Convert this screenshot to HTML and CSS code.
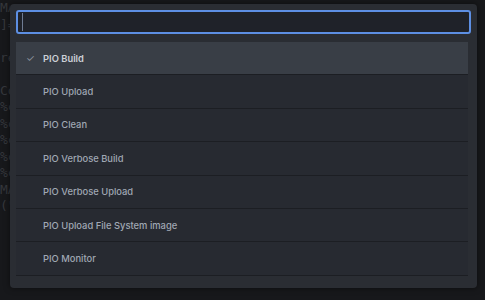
FILE: index.html
```html
<!DOCTYPE html>
<html lang="en">
<head>
  <meta charset="UTF-8" />
  <title>Command Palette</title>
  <link rel="stylesheet" href="styles.css">
</head>
<body>

  <pre class="editor">MA
]=

re

Co
%c
%c
%c
%c
%c
MA
("</pre>

  <div class="palette">
    <div class="search">
      <span class="caret"></span>
    </div>

    <ul class="items">
      <li class="item selected"><span class="check">&#10003;</span>PIO Build</li>
      <li class="item">PIO Upload</li>
      <li class="item">PIO Clean</li>
      <li class="item">PIO Verbose Build</li>
      <li class="item">PIO Verbose Upload</li>
      <li class="item">PIO Upload File System image</li>
      <li class="item">PIO Monitor</li>
    </ul>
  </div>

</body>
</html>
```

FILE: styles.css
```css
body {
  margin: 0;
  width: 485px;
  height: 300px;
  background-color: #17181b;
  font-family: 'Inter', 'Noto Sans', sans-serif;
  overflow: hidden;
  position: relative;
}

.editor {
  margin: 0;
  width: 10px;
  overflow: hidden;
  font-family: 'DejaVu Sans Mono', monospace;
  font-size: 13px;
  line-height: 16.5px;
  color: #35373c;
}

.palette {
  position: absolute;
  left: 10px;
  top: 4px;
  width: 467px;
  height: 284px;
  box-sizing: border-box;
  padding: 6px 9px 0 6px;
  background: #2a2d33;
  border-radius: 4px;
  box-shadow: 0 0 6px rgba(0, 0, 0, 0.5);
}

.search {
  height: 24px;
  box-sizing: border-box;
  border: 2px solid #5d8fe3;
  border-radius: 3px;
  background: #1f2229;
  margin-right: -3px;
  display: flex;
  align-items: center;
  padding-left: 4px;
}

.caret {
  width: 1px;
  height: 18px;
  background: #6f7c94;
}

.items {
  list-style: none;
  margin: 8px 0 0 0;
  padding: 0;
  background: #272a31;
  border-bottom: 1px solid #1c1e23;
}

.item {
  height: 32.4px;
  border-bottom: 1px solid #1c1e23;
  display: flex;
  align-items: center;
  padding-left: 27px;
  font-size: 9.4px;
  font-weight: 500;
  color: #a0a8b4;
}

.item:last-child {
  border-bottom: none;
}

.selected {
  background: #393e46;
  color: #ccd0d6;
  font-weight: 600;
  padding-left: 10px;
}

.check {
  width: 17px;
  font-size: 10px;
  color: #8c939d;
  font-weight: normal;
}
```
